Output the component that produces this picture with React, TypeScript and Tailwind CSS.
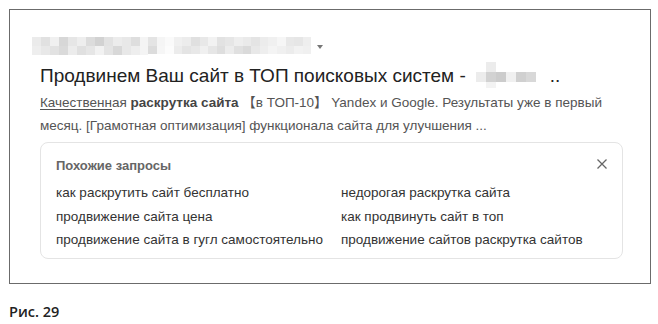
import React from "react";

const urlRow1 = [235,225,240,215,230,238,220,210,226,236,232,222,228,245,250,240,236,224,232,242,226,230,238,234,228,236,240,246,232,230];
const urlRow2 = [238,232,226,218,236,224,230,242,228,216,232,238,220,246,252,236,228,232,240,230,222,236,224,218,232,238,244,240,236,242];

function Pixel({ row1, row2, size }: { row1: number[]; row2: number[]; size: number }) {
  return (
    <div className="flex flex-col">
      {[row1, row2].map((row, r) => (
        <div key={r} className="flex">
          {row.map((v, i) => (
            <div key={i} style={{ width: size, height: size, background: `rgb(${v},${v},${v})` }} />
          ))}
        </div>
      ))}
    </div>
  );
}

export default function App() {
  const font = { fontFamily: '"Liberation Sans", Arial, "Noto Sans CJK SC", sans-serif' };
  return (
    <div className="w-[658px] h-[324px] bg-white relative" style={font}>
      <div className="absolute left-[9px] top-[9px] w-[642px] h-[275px] border border-[#6b6b6b]">
        <div className="flex flex-col pl-[22px] pt-[27px]">
          <div className="flex items-center h-[18px]">
            <div className="flex">
              <Pixel row1={urlRow1.slice(0, 12)} row2={urlRow2.slice(0, 12)} size={9} />
              <div className="w-[8px] h-[18px] bg-[#f4f4f4]" />
              <Pixel row1={urlRow1.slice(12, 30).concat([238])} row2={urlRow2.slice(12, 30).concat([240])} size={8.6} />
            </div>
            <svg width="6" height="4" viewBox="0 0 6 4" className="ml-[6px] mt-[2px]">
              <path d="M0 0 L6 0 L3 4 Z" fill="#777" />
            </svg>
          </div>
          <div className="flex items-center mt-[6px] pl-[8px] h-[28px] text-[19px] text-[#222] leading-none">
            <span>Продвинем Ваш сайт в ТОП поисковых систем -</span>
            <div className="ml-[10px] flex flex-col">
              <div className="flex">
                <div className="w-[10px] h-[10px]" />
                <div className="w-[10px] h-[10px] bg-[#ececec]" />
              </div>
              <div className="flex">
                <div className="w-[10px] h-[10px] bg-[#ececec]" />
                <div className="w-[10px] h-[10px] bg-[#d2d2d2]" />
                <div className="w-[10px] h-[10px] bg-[#cccccc]" />
                <div className="w-[10px] h-[10px] bg-[#f0f0f0]" />
                <div className="w-[10px] h-[10px] bg-[#d0d0d0]" />
                <div className="w-[10px] h-[10px] bg-[#d8d8d8]" />
              </div>
              <div className="flex">
                <div className="w-[10px] h-[6px]" />
                <div className="w-[10px] h-[6px] bg-[#f3f3f3]" />
              </div>
            </div>
            <span className="ml-[14px]">..</span>
          </div>
          <div className="pl-[8px] mt-[2px] text-[13.5px] leading-[23px] text-[#545454] w-[600px]">
            <div className="whitespace-nowrap">
              <span className="underline underline-offset-2">Качественн</span>ая <b className="text-[#444]">раскрутка сайта</b> 【в ТОП-10】 Yandex и Google. Результаты уже в первый
            </div>
            <div>месяц. [Грамотная оптимизация] функционала сайта для улучшения ...</div>
          </div>
          <div className="mt-[5px] ml-[8px] w-[583px] h-[117px] border border-[#e4e4e4] rounded-[8px] px-[15px] pt-[13px] relative">
            <div className="text-[13px] font-bold text-[#666] leading-[19px]">Похожие запросы</div>
            <svg width="10" height="10" viewBox="0 0 10 10" className="absolute right-[15px] top-[16px]">
              <path d="M0.5 0.5 L9.5 9.5 M9.5 0.5 L0.5 9.5" stroke="#666" strokeWidth="1.3" />
            </svg>
            <div className="grid grid-cols-[285px_1fr] mt-[6px] text-[13.5px] leading-[23.5px] text-[#333]">
              <div>как раскрутить сайт бесплатно</div>
              <div>недорогая раскрутка сайта</div>
              <div>продвижение сайта цена</div>
              <div>как продвинуть сайт в топ</div>
              <div>продвижение сайта в гугл самостоятельно</div>
              <div>продвижение сайтов раскрутка сайтов</div>
            </div>
          </div>
        </div>
      </div>
      <div className="absolute left-[9px] top-[301px] text-[14.5px] font-semibold text-[#222]" style={{ fontFamily: '"Open Sans", sans-serif' }}>
        Рис. 29
      </div>
    </div>
  );
}
